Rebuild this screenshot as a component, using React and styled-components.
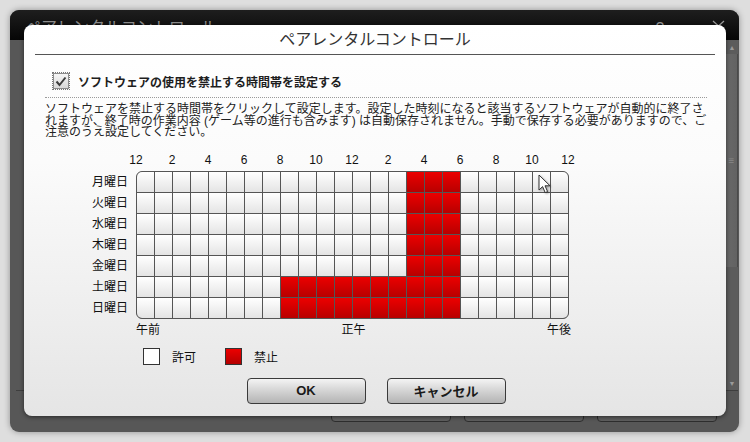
import React from 'react'
import styled, {createGlobalStyle} from 'styled-components'

const GlobalStyle = createGlobalStyle`
  html, body {
    margin: 0;
    padding: 0;
  }

  body {
    width: 750px;
    height: 442px;
    overflow: hidden;
    background: #dedede;
    font-family: "Liberation Sans", "Noto Sans CJK JP", sans-serif;
    color: #222;
  }
`

const DAYS = ['月曜日', '火曜日', '水曜日', '木曜日', '金曜日', '土曜日', '日曜日']
const AXIS = [12, 2, 4, 6, 8, 10, 12, 2, 4, 6, 8, 10, 12]

const isBlocked = (day, hour) =>
  day < 5 ? hour >= 15 && hour < 18 : hour >= 8 && hour < 18

const Page = styled.div`
  position: relative;
  width: 750px;
  height: 442px;
  box-sizing: border-box;
  padding: 10px 11px 10px 10px;
`

/* window behind the dialog */

const BackWindow = styled.div`
  display: flex;
  flex-direction: column;
  height: 422px;
  border-radius: 9px;
  background: #575757;
  box-shadow: 0 0 6px rgba(0, 0, 0, 0.35);
  overflow: hidden;
`

const TitleBar = styled.div`
  display: flex;
  align-items: center;
  height: 30px;
  padding: 2px 14px 0 15px;
  box-sizing: border-box;
  background: linear-gradient(#1e1e1e, #060606);
  color: #8e8e8e;
  font-size: 16px;
`

const WindowControls = styled.div`
  display: flex;
  align-items: center;
  gap: 48px;
  margin-left: auto;
  font-size: 15px;
  color: #9a9a9a;
`

const BackBody = styled.div`
  flex: 1;
  display: flex;
  flex-direction: column;
  padding: 0 1px 0 6px;
`

const ScrollArea = styled.div`
  flex: 1;
  display: flex;
  border-bottom: 1px solid #3e3e3e;
`

const ScrollContent = styled.div`
  flex: 1;
`

const ScrollBar = styled.div`
  display: flex;
  flex-direction: column;
  width: 12px;
  background: #5c5c5c;
`

const ScrollArrow = styled.div`
  height: 14px;
  display: flex;
  align-items: center;
  justify-content: center;
  color: #9a9a9a;
  font-size: 7px;
  line-height: 1;
`

const ScrollThumb = styled.div`
  height: 213px;
  display: flex;
  align-items: center;
  justify-content: center;
  background: linear-gradient(90deg, #6a6a6a, #626262);
  border-right: 1px solid #4a4a4a;
  box-sizing: border-box;
  color: #888;
  font-size: 10px;
`

const ScrollTrack = styled.div`
  flex: 1;
`

const BackFooter = styled.div`
  display: flex;
  justify-content: flex-end;
  gap: 13px;
  height: 41px;
  padding: 5px 21px 0 0;
  box-sizing: border-box;
`

const BackButton = styled.div`
  width: 120px;
  height: 26px;
  border: 1px solid #2e2e2e;
  border-radius: 4px;
  background: #5e5e5e;
  box-sizing: border-box;
`

/* dialog */

const Dialog = styled.div`
  position: absolute;
  left: 24px;
  top: 25px;
  width: 702px;
  height: 391px;
  display: flex;
  flex-direction: column;
  border-radius: 8px;
  background: linear-gradient(#ffffff 0%, #fbfbfb 35%, #e5e5e5 100%);
  box-shadow: 0 1px 4px rgba(0, 0, 0, 0.55);
`

const DialogHeader = styled.div`
  height: 28px;
  margin: 0 11px;
  padding-top: 1px;
  border-bottom: 1px solid #555;
  text-align: center;
  line-height: 28px;
  font-size: 16px;
  color: #333;
`

const DialogBody = styled.div`
  display: flex;
  flex-direction: column;
  padding: 0 19px 0 21px;
`

const CheckRow = styled.label`
  display: flex;
  align-items: center;
  gap: 9px;
  height: 16px;
  margin-top: 18px;
  padding-left: 8px;
  font-size: 12px;
  font-weight: bold;
  color: #1e1e1e;
`

const CheckBox = styled.span`
  display: flex;
  align-items: center;
  justify-content: center;
  width: 16px;
  height: 16px;
  box-sizing: border-box;
  border: 1px solid #8c8c8c;
  outline: 1px dotted #777;
  background: linear-gradient(#f6f6f6, #d8d8d8);
`

const DottedRule = styled.div`
  margin-top: 8px;
  border-top: 1px dotted #9a9a9a;
`

const Notice = styled.p`
  margin: 6px 0 0;
  font-size: 12px;
  line-height: 11.5px;
  color: #222;
  white-space: nowrap;
`

const NoticeLine = styled.span`
  display: block;
`

const Schedule = styled.div`
  display: flex;
  flex-direction: column;
  margin-top: 14px;
`

const AxisRow = styled.div`
  display: flex;
  margin-left: 73px;
  height: 14px;
`

const AxisLabel = styled.span`
  width: 36px;
  text-align: center;
  font-size: 12px;
  line-height: 14px;
  color: #111;
`

const GridRow = styled.div`
  display: flex;
  gap: 8px;
  margin-top: 4px;
`

const DayColumn = styled.div`
  display: grid;
  grid-template-rows: repeat(7, 20px);
  row-gap: 1px;
  width: 83px;
  padding-top: 1px;
`

const DayLabel = styled.span`
  text-align: right;
  font-size: 12px;
  line-height: 20px;
  color: #111;
`

const GridWrap = styled.div`
  position: relative;
`

const Grid = styled.div`
  display: grid;
  grid-template-columns: repeat(24, 17px);
  grid-template-rows: repeat(7, 20px);
  gap: 1px;
  border: 1px solid #555;
  border-radius: 6px;
  background: #555;
  overflow: hidden;
`

const Cell = styled.div`
  background: ${({$blocked}) =>
    $blocked
      ? 'linear-gradient(#ec0000, #b80000)'
      : 'linear-gradient(#ffffff, #e4e4e4)'};
`

const Pointer = styled.svg`
  position: absolute;
  left: 402px;
  top: 3px;
  filter: drop-shadow(1px 1px 1px rgba(0, 0, 0, 0.35));
`

const NoonRow = styled.div`
  display: flex;
  justify-content: space-between;
  width: 435px;
  margin: 4px 0 0 91px;
  font-size: 12px;
  line-height: 14px;
  color: #111;
`

const Legend = styled.div`
  display: flex;
  align-items: center;
  margin: 11px 0 0 98px;
`

const LegendItem = styled.div`
  display: flex;
  align-items: center;
  gap: 12px;
  width: 82px;
  font-size: 12px;
  color: #111;
`

const Swatch = styled.span`
  width: 17px;
  height: 17px;
  box-sizing: border-box;
  border: 1px solid #333;
  background: ${({$blocked}) =>
    $blocked ? 'linear-gradient(#ec0000, #b40000)' : '#fff'};
`

const ButtonRow = styled.div`
  display: flex;
  justify-content: center;
  gap: 21px;
  margin-top: 13px;
`

const Button = styled.button`
  width: 119px;
  height: 26px;
  border: 1px solid #3a3a3a;
  border-radius: 4px;
  background: linear-gradient(#f4f4f4, #d6d6d6 45%, #b4b4b4);
  font: inherit;
  font-size: 13px;
  font-weight: bold;
  color: #1a1a1a;
  cursor: pointer;
`

const App = () => (
  <>
    <GlobalStyle />
    <Page>
      <BackWindow>
        <TitleBar>
          <span>ペアレンタルコントロール</span>
          <WindowControls>
            <span>?</span>
            <svg width="13" height="12" viewBox="0 0 13 12">
              <path d="M1 1 L12 11 M12 1 L1 11" stroke="#9a9a9a" strokeWidth="1.2" />
            </svg>
          </WindowControls>
        </TitleBar>
        <BackBody>
          <ScrollArea>
            <ScrollContent />
            <ScrollBar>
              <ScrollArrow>▲</ScrollArrow>
              <ScrollThumb>≡</ScrollThumb>
              <ScrollTrack />
              <ScrollArrow>▼</ScrollArrow>
            </ScrollBar>
          </ScrollArea>
          <BackFooter>
            <BackButton />
            <BackButton />
            <BackButton />
          </BackFooter>
        </BackBody>
      </BackWindow>

      <Dialog>
        <DialogHeader>ペアレンタルコントロール</DialogHeader>
        <DialogBody>
          <CheckRow>
            <CheckBox>
              <svg width="12" height="11" viewBox="0 0 12 11">
                <path d="M1.5 5.5 L4.5 9 L10.5 1.5" fill="none" stroke="#3c3c3c" strokeWidth="2" />
              </svg>
            </CheckBox>
            ソフトウェアの使用を禁止する時間帯を設定する
          </CheckRow>
          <DottedRule />
          <Notice>
            <NoticeLine>ソフトウェアを禁止する時間帯をクリックして設定します。設定した時刻になると該当するソフトウェアが自動的に終了さ</NoticeLine>
            <NoticeLine>れますが、終了時の作業内容 (ゲーム等の進行も含みます) は自動保存されません。手動で保存する必要がありますので、ご</NoticeLine>
            <NoticeLine>注意のうえ設定してください。</NoticeLine>
          </Notice>

          <Schedule>
            <AxisRow>
              {AXIS.map((h, i) => (
                <AxisLabel key={i}>{h}</AxisLabel>
              ))}
            </AxisRow>
            <GridRow>
              <DayColumn>
                {DAYS.map((d) => (
                  <DayLabel key={d}>{d}</DayLabel>
                ))}
              </DayColumn>
              <GridWrap>
                <Grid>
                  {DAYS.map((d, day) =>
                    Array.from({length: 24}, (_, hour) => (
                      <Cell key={d + hour} $blocked={isBlocked(day, hour)} />
                    ))
                  )}
                </Grid>
                <Pointer width="13" height="20" viewBox="0 0 13 20">
                  <path
                    d="M1 1 L1 16 L4.6 12.6 L7.2 18.6 L9.6 17.6 L7 11.8 L12 11.8 Z"
                    fill="#fff"
                    stroke="#333"
                    strokeWidth="1"
                    strokeLinejoin="round"
                  />
                </Pointer>
              </GridWrap>
            </GridRow>
            <NoonRow>
              <span>午前</span>
              <span>正午</span>
              <span>午後</span>
            </NoonRow>
          </Schedule>

          <Legend>
            <LegendItem>
              <Swatch />
              許可
            </LegendItem>
            <LegendItem>
              <Swatch $blocked />
              禁止
            </LegendItem>
          </Legend>

          <ButtonRow>
            <Button>OK</Button>
            <Button>キャンセル</Button>
          </ButtonRow>
        </DialogBody>
      </Dialog>
    </Page>
  </>
)

export default App
